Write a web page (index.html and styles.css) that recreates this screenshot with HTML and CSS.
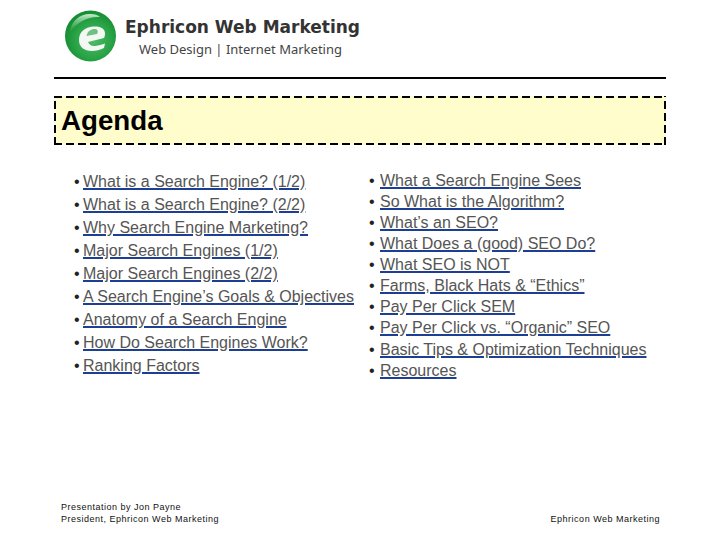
FILE: index.html
```html
<!DOCTYPE html>
<html lang="en">
<head>
<meta charset="utf-8">
<title>Agenda</title>
<link rel="stylesheet" href="styles.css">
</head>
<body>
<div class="slide">
  <header class="header">
    <svg class="logo" width="54" height="52" viewBox="0 0 54 52" aria-hidden="true">
      <defs>
        <radialGradient id="ball" cx="0.55" cy="0.58" r="0.7">
          <stop offset="0" stop-color="#4cbd68"/>
          <stop offset="0.5" stop-color="#2ba347"/>
          <stop offset="0.85" stop-color="#128a30"/>
          <stop offset="1" stop-color="#0e7a2a"/>
        </radialGradient>
        <linearGradient id="shine" x1="0" y1="0" x2="0" y2="1">
          <stop offset="0" stop-color="#c9ecd0"/>
          <stop offset="1" stop-color="#4ab765" stop-opacity="0.2"/>
        </linearGradient>
      </defs>
      <circle cx="26.500" cy="26" r="25.500" fill="url(#ball)"/>
      <path d="M6 22C7 11 16 4 26 4c5 0 8 1 10 3C25 6 13 12 6 22z" fill="url(#shine)"/>
      <path d="M29 16.500C36 16 41 18 41 23.500C41 25.500 40.500 27 40 28L24 32C25.500 35 28 36.500 31 36C35 35.500 38 34.500 41 33.500L40 38C36 40 32 41 28 41C20 41 15 37 15 30C15 22 21 17 29 16.500z" fill="#f4f8f2"/>
      <path d="M22.500 26C23.500 21 27 19 30.500 19C33 19 34.500 20.500 33.500 23L33 24z" fill="#6fc183"/>
    </svg>
    <div class="brand">
      <div class="brand-name">Ephricon Web Marketing</div>
      <div class="brand-tag">Web Design | Internet Marketing</div>
    </div>
  </header>
  <hr class="rule">
  <h1 class="title">Agenda</h1>
  <div class="columns">
    <ul class="list list-left">
      <li><a href="#">What is a Search Engine? (1/2)</a></li>
      <li><a href="#">What is a Search Engine? (2/2)</a></li>
      <li><a href="#">Why Search Engine Marketing?</a></li>
      <li><a href="#">Major Search Engines (1/2)</a></li>
      <li><a href="#">Major Search Engines (2/2)</a></li>
      <li><a href="#">A Search Engine’s Goals &amp; Objectives</a></li>
      <li><a href="#">Anatomy of a Search Engine</a></li>
      <li><a href="#">How Do Search Engines Work?</a></li>
      <li><a href="#">Ranking Factors</a></li>
    </ul>
    <ul class="list list-right">
      <li><a href="#">What a Search Engine Sees</a></li>
      <li><a href="#">So What is the Algorithm?</a></li>
      <li><a href="#">What’s an SEO?</a></li>
      <li><a href="#">What Does a (good) SEO Do?</a></li>
      <li><a href="#">What SEO is NOT</a></li>
      <li><a href="#">Farms, Black Hats &amp; “Ethics”</a></li>
      <li><a href="#">Pay Per Click SEM</a></li>
      <li><a href="#">Pay Per Click vs. “Organic” SEO</a></li>
      <li class="list-gap"><a href="#">Basic Tips &amp; Optimization Techniques</a></li>
      <li><a href="#">Resources</a></li>
    </ul>
  </div>
  <footer class="footer">
    <div>Presentation by Jon Payne<br>President, Ephricon Web Marketing</div>
    <div>Ephricon Web Marketing</div>
  </footer>
</div>
</body>
</html>
```
FILE: styles.css
```css
html, body {
  margin: 0;
  padding: 0;
  background: #fff;
}
.slide {
  width: 720px;
  height: 540px;
  overflow: hidden;
  display: flex;
  flex-direction: column;
  font-family: "Liberation Sans", Arial, sans-serif;
  color: #555;
}
.header {
  display: flex;
  align-items: flex-start;
  height: 77px;
  box-sizing: border-box;
  padding: 10px 0 0 64px;
}
.logo {
  flex: none;
}
.brand {
  margin-left: 7px;
  display: flex;
  flex-direction: column;
}
.brand-name {
  font-family: "DejaVu Sans", sans-serif;
  font-weight: 700;
  font-size: 17px;
  line-height: 22px;
  margin-top: 6px;
  color: #333;
  white-space: nowrap;
}
.brand-tag {
  font-family: "Noto Sans", sans-serif;
  font-size: 13px;
  line-height: 20px;
  margin: 1px 0 0 14px;
  color: #444;
  white-space: nowrap;
}
.rule {
  margin: 0 54px;
  height: 2px;
  border: 0;
  background: #000;
}
.title {
  margin: 17px 54px 0;
  height: 49px;
  box-sizing: border-box;
  padding: 2px 0 0 7px;
  background-color: #fffdcc;
  background-image:
    repeating-linear-gradient(90deg, #000 0 8px, transparent 8px 12px),
    repeating-linear-gradient(90deg, #000 0 8px, transparent 8px 12px),
    repeating-linear-gradient(0deg, #000 0 8px, transparent 8px 12px),
    repeating-linear-gradient(0deg, #000 0 8px, transparent 8px 12px);
  background-size: 100% 2px, 100% 2px, 2px 100%, 2px 100%;
  background-position: 0 0, 0 100%, 0 0, 100% 0;
  background-repeat: no-repeat;
  color: #000;
  font-size: 27.700px;
  font-weight: 700;
  line-height: 45px;
}
.columns {
  display: flex;
  flex: 1;
  padding: 25px 0 0 74px;
}
.list {
  margin: 0;
  padding: 0;
  list-style: none;
  font-size: 16px;
}
.list li::before {
  content: "•";
  display: inline-block;
  width: 9px;
  color: #222;
}
.list a {
  color: #555;
  text-decoration-color: #1c3f94;
  text-decoration-thickness: 1.500px;
}
.list-left {
  width: 295px;
  line-height: 23px;
}
.list-right {
  line-height: 21px;
}
.list-right li::before {
  width: 11px;
}
.list-right .list-gap {
  margin-top: 1px;
}
.footer {
  display: flex;
  justify-content: space-between;
  align-items: flex-end;
  padding: 0 60px 15px 61px;
  font-size: 9px;
  line-height: 12px;
  letter-spacing: 0.500px;
  color: #111;
}
```
